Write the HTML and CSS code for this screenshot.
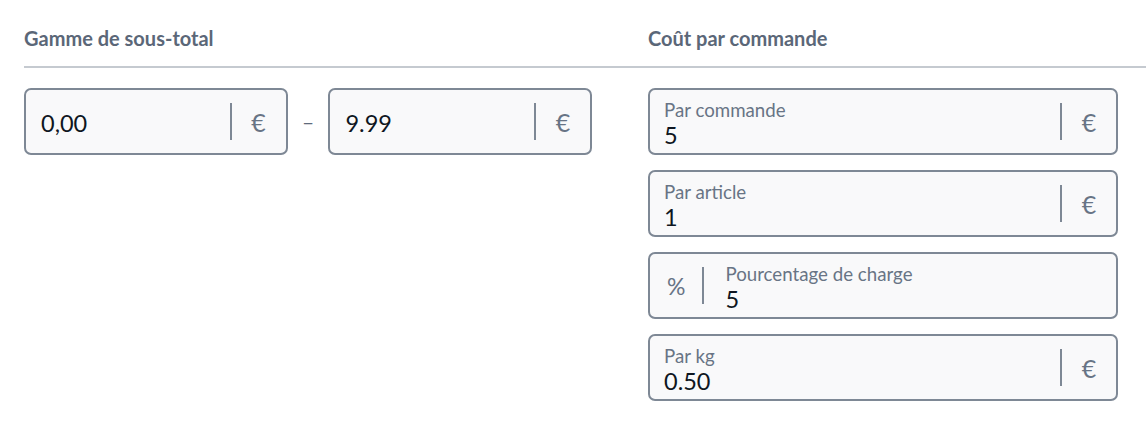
FILE: index.html
```html
<!DOCTYPE html>
<html lang="fr">
<head>
<meta charset="utf-8">
<title>Frais de livraison</title>
<link rel="stylesheet" href="styles.css">
</head>
<body>
<div class="page">
  <div class="head">
    <h3 class="title">Gamme de sous-total</h3>
    <h3 class="title">Coût par commande</h3>
  </div>
  <div class="body">
    <div class="range">
      <div class="field field-range">
        <div class="value-only">0,00</div>
        <div class="addon addon-right"><span class="sep"></span><span class="unit">€</span></div>
      </div>
      <span class="dash">–</span>
      <div class="field field-range">
        <div class="value-only">9.99</div>
        <div class="addon addon-right"><span class="sep"></span><span class="unit">€</span></div>
      </div>
    </div>
    <div class="stack">
      <div class="field">
        <div class="labelled"><span class="label">Par commande</span><span class="value">5</span></div>
        <div class="addon addon-right"><span class="sep"></span><span class="unit">€</span></div>
      </div>
      <div class="field">
        <div class="labelled"><span class="label">Par article</span><span class="value">1</span></div>
        <div class="addon addon-right"><span class="sep"></span><span class="unit">€</span></div>
      </div>
      <div class="field">
        <div class="addon addon-left"><span class="unit unit-pct">%</span><span class="sep"></span></div>
        <div class="labelled labelled-after"><span class="label">Pourcentage de charge</span><span class="value">5</span></div>
      </div>
      <div class="field">
        <div class="labelled"><span class="label">Par kg</span><span class="value">0.50</span></div>
        <div class="addon addon-right"><span class="sep"></span><span class="unit">€</span></div>
      </div>
    </div>
  </div>
</div>
</body>
</html>
```

FILE: styles.css
```css
* { box-sizing: border-box; }
html, body { margin: 0; padding: 0; background: #ffffff; }
body { font-family: Lato, "Open Sans", sans-serif; overflow: hidden; }

.page { padding-left: 24px; }

.head {
  display: grid;
  grid-template-columns: 568px 470px;
  column-gap: 56px;
  padding-top: 26px;
  padding-bottom: 16px;
  border-bottom: 2px solid #c5cad0;
}
.title {
  margin: 0;
  font-size: 20px;
  line-height: 24px;
  font-weight: 700;
  color: #5b6778;
}

.body {
  display: grid;
  grid-template-columns: 568px 470px;
  column-gap: 56px;
  align-items: start;
  padding-top: 20px;
}

.range { display: flex; align-items: center; }
.dash {
  width: 41px;
  text-align: center;
  font-size: 21px;
  color: #5f6b7b;
}

.stack { display: flex; flex-direction: column; gap: 15px; }

.field {
  display: flex;
  align-items: stretch;
  height: 67px;
  border: 2px solid #7e8895;
  border-radius: 7px;
  background: #f9f9fa;
}
.field-range { width: 264px; }

.value-only {
  flex: 1;
  display: flex;
  align-items: center;
  padding: 2px 0 0 15px;
  font-size: 23.5px;
  line-height: 28px;
  color: #0e1621;
}

.labelled {
  flex: 1;
  display: flex;
  flex-direction: column;
  padding: 9px 0 0 14px;
}
.labelled-after { padding-left: 21px; }
.label {
  font-size: 18.7px;
  line-height: 22px;
  color: #687485;
}
.value {
  font-size: 23.5px;
  line-height: 28px;
  color: #0e1621;
}

.addon { display: flex; align-items: center; }
.sep {
  width: 2px;
  height: 37px;
  background: #7e8895;
}
.unit {
  width: 54px;
  text-align: center;
  font-size: 25px;
  color: #687485;
}
.unit-pct { width: auto; font-size: 23px; padding: 0 17px 0 17px; }
```
